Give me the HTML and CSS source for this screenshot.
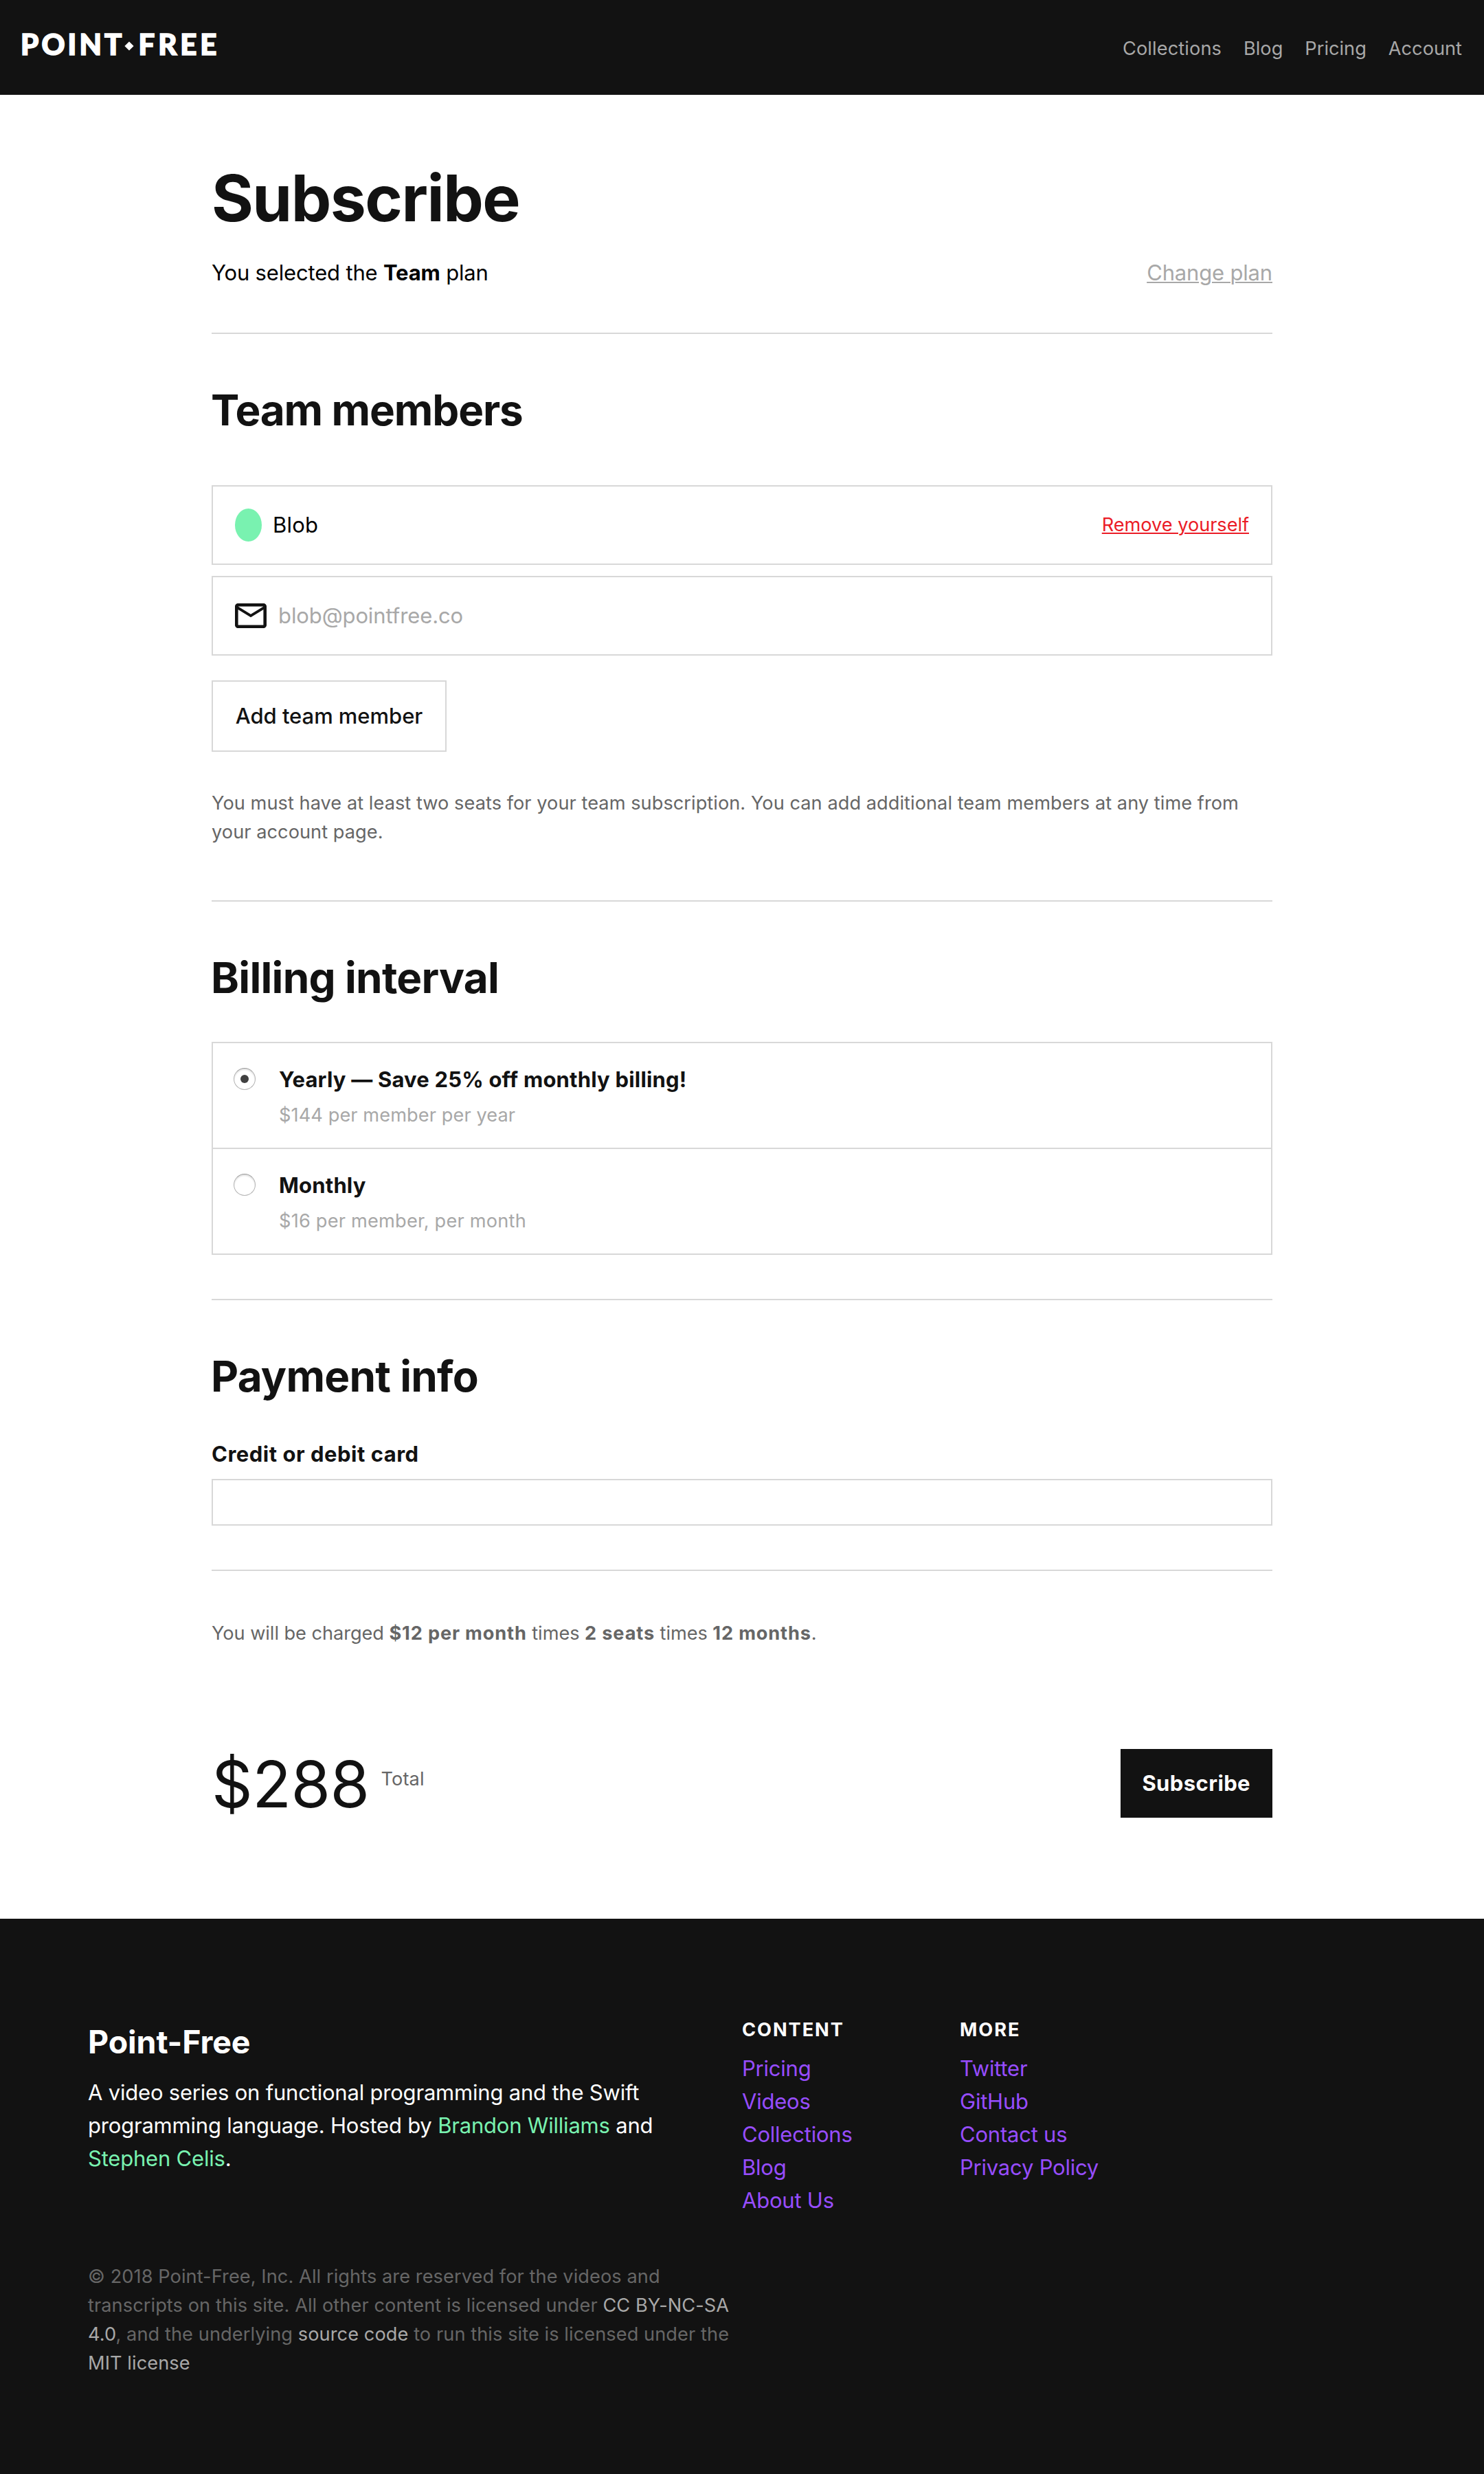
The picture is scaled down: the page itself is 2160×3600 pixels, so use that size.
FILE: index.html
```html
<!DOCTYPE html>
<html lang="en">
<head>
<meta charset="utf-8">
<title>Subscribe</title>
<link rel="stylesheet" href="styles.css">
</head>
<body>
<header class="header">
  <a class="logo"><span class="logo-point">POINT</span><svg class="logo-dot" viewBox="0 0 14 14"><path d="M7 0.4 13.6 7 7 13.6 0.4 7z" fill="#fff"/></svg><span class="logo-free">FREE</span></a>
  <nav class="nav">
    <a class="nav-wide">Collections</a><a>Blog</a><a>Pricing</a><a>Account</a>
  </nav>
</header>

<main class="main">
  <section class="section">
    <h1 class="page-title">Subscribe</h1>
    <div class="plan">
      <p>You selected the <b>Team</b> plan</p>
      <a class="change">Change plan</a>
    </div>
  </section>

  <section class="section section-team">
    <h2 class="title title-team">Team members</h2>
    <div class="member">
      <span class="avatar"></span>
      <span class="member-name">Blob</span>
      <a class="remove">Remove yourself</a>
    </div>
    <div class="member">
      <svg class="mail" viewBox="2 4 20 16" preserveAspectRatio="none"><path fill="#121212" d="M22 6c0-1.1-.9-2-2-2H4c-1.1 0-2 .9-2 2v12c0 1.1.9 2 2 2h16c1.1 0 2-.9 2-2V6zm-2 0l-8 5-8-5h16zm0 12H4V8l8 5 8-5v10z"/></svg>
      <span class="placeholder">blob@pointfree.co</span>
    </div>
    <button class="add">Add team member</button>
    <p class="note">You must have at least two seats for your team subscription. You can add additional team members at any time from your account page.</p>
  </section>

  <section class="section section-billing">
    <h2 class="title title-billing">Billing interval</h2>
    <div class="options">
      <div class="option">
        <span class="radio radio-on"></span>
        <div><div class="option-title">Yearly — Save 25% off monthly billing!</div><div class="option-price">$144 per member per year</div></div>
      </div>
      <div class="option">
        <span class="radio"></span>
        <div><div class="option-title">Monthly</div><div class="option-price option-monthly">$16 per member, per month</div></div>
      </div>
    </div>
  </section>

  <section class="section section-payment">
    <h2 class="title title-payment">Payment info</h2>
    <div class="label">Credit or debit card</div>
    <div class="card"></div>
  </section>

  <p class="charge">You will be charged <b>$12 per month</b> times <b>2 seats</b> times <b>12 months</b>.</p>
  <div class="total">
    <span class="amount">$288</span>
    <span class="total-label">Total</span>
    <button class="submit">Subscribe</button>
  </div>
</main>

<footer class="footer">
  <div class="footer-grid">
    <div class="about">
      <h4 class="footer-title">Point-Free</h4>
      <p class="about-text">A video series on functional programming and the Swift programming language. Hosted by <a>Brandon Williams</a> and <a>Stephen Celis</a>.</p>
    </div>
    <div class="links">
      <h5 class="links-title">Content</h5>
      <a>Pricing</a><a>Videos</a><a>Collections</a><a>Blog</a><a>About Us</a>
    </div>
    <div class="links">
      <h5 class="links-title">More</h5>
      <a>Twitter</a><a>GitHub</a><a>Contact us</a><a>Privacy Policy</a>
    </div>
  </div>
  <p class="legal">© 2018 Point-Free, Inc. All rights are reserved for the videos and transcripts on this site. All other content is licensed under <a>CC BY-NC-SA 4.0</a>, and the underlying <a>source code</a> to run this site is licensed under the <a>MIT license</a></p>
</footer>
</body>
</html>
```
FILE: styles.css
```css
* { box-sizing: border-box; margin: 0; padding: 0; }
body { background: #fff; color: #000; font: 400 31px/48px Inter, sans-serif; }
button { font: inherit; cursor: pointer; }
b { font-weight: 700; }

.header { display: flex; justify-content: space-between; align-items: flex-start; height: 138px; padding: 43px 32px 0; background: #121212; }
.logo { display: flex; align-items: flex-start; margin-left: -2px; color: #fff; font: 900 42px/42px Lato, sans-serif; -webkit-text-stroke: 1.6px #fff; }
.logo-point { letter-spacing: 4.1px; }
.logo-free { margin-left: 6px; letter-spacing: 4.9px; }
.logo-dot { width: 14px; height: 14px; margin-top: 17px; }
.nav { display: flex; gap: 32px; margin-top: 7px; color: #a8a8a8; font-size: 27.2px; line-height: 42px; }
.nav-wide { letter-spacing: .1px; }

.main { padding: 94px 308px 140px; }
.section { border-bottom: 2px solid #d8d8d8; padding-bottom: 64px; }
.section:first-child { padding-bottom: 63px; }
.section-team { padding: 71px 0 78px; }
.section-billing, .section-payment { padding-top: 71px; }

.page-title { color: #121212; font-size: 93px; font-weight: 700; line-height: 112px; letter-spacing: -1.54px; }
.plan { display: flex; justify-content: space-between; margin-top: 29px; letter-spacing: -.17px; }
.change { color: #a8a8a8; text-decoration: underline; text-decoration-thickness: 2px; text-underline-offset: 2px; }

.title { margin-left: -1px; color: #121212; font-size: 62px; font-weight: 700; line-height: 80px; }
.title-team { margin-bottom: 69px; letter-spacing: -1.15px; }
.title-billing { margin-bottom: 53px; letter-spacing: -.72px; }
.title-payment { margin-bottom: 49px; letter-spacing: -.75px; }

.member { display: flex; align-items: center; gap: 16px; height: 116px; padding: 0 32px; border: 2px solid #d8d8d8; }
.member + .member { gap: 17px; margin-top: 16px; }
.avatar { width: 39px; height: 48px; border-radius: 50%; background: #79f2b0; }
.member-name { letter-spacing: .2px; }
.remove { margin-left: auto; color: #eb1c26; font-size: 27.2px; letter-spacing: -.05px; text-decoration: underline; text-decoration-thickness: 2px; text-underline-offset: 2px; }
.mail { width: 46px; height: 36px; }
.placeholder { color: #a8a8a8; letter-spacing: -.1px; }
.add { display: block; width: 342px; height: 104px; margin-top: 36px; border: 2px solid #d8d8d8; background: #fff; color: #121212; font-weight: 500; letter-spacing: -.04px; }
.note { margin-top: 54px; color: #666; font-size: 27.2px; line-height: 42px; letter-spacing: .04px; }

.options { border: 2px solid #d8d8d8; }
.option { display: flex; align-items: flex-start; gap: 34px; height: 152px; padding: 29px 30px 0; }
.option + .option { height: 154px; border-top: 2px solid #d8d8d8; }
.radio { display: flex; align-items: center; justify-content: center; width: 32px; height: 32px; margin-top: 7px; border: 1px solid #b4b4b4; border-top-color: #969696; border-radius: 50%; box-shadow: inset 0 2px 2px #e2e2e2; }
.radio-on::before { content: ""; width: 12px; height: 12px; border-radius: 50%; background: #404040; }
.option-title { color: #121212; font-weight: 700; letter-spacing: .19px; }
.option-price { margin-top: 7px; color: #a8a8a8; font-size: 27.2px; line-height: 42px; letter-spacing: .08px; }
.option-monthly { letter-spacing: .2px; }

.label { color: #121212; font-weight: 700; letter-spacing: .51px; }
.card { height: 68px; margin-top: 12px; border: 2px solid #d8d8d8; }

.charge { margin-top: 70px; color: #666; font-size: 27.2px; line-height: 42px; letter-spacing: -.06px; }
.charge b { letter-spacing: .84px; }
.total { display: flex; align-items: flex-start; margin-top: 142px; }
.amount { color: #121212; font-size: 93px; line-height: 112px; letter-spacing: -.5px; }
.total-label { margin: 28px 0 0 17px; color: #666; font-size: 27.2px; line-height: 42px; letter-spacing: .12px; }
.submit { height: 100px; margin: 5px 0 0 auto; padding: 0 32px 0 31px; border: 0; background: #121212; color: #fff; font-weight: 700; letter-spacing: .4px; }

.footer { height: 808px; padding: 141px 128px 0; background: #121212; color: #fff; }
.footer-grid { display: grid; grid-template-columns: 952px 317px auto; }
.about { padding-top: 8px; }
.footer-title { font-size: 46.5px; font-weight: 700; line-height: 60px; letter-spacing: -.1px; }
.about-text { width: 850px; margin-top: 20px; letter-spacing: -.2px; }
.about-text a { color: #79f2b0; }
.links { display: flex; flex-direction: column; color: #974dff; letter-spacing: -.22px; }
.links-title { margin-bottom: 11px; color: #fff; font-size: 27.2px; line-height: 42px; letter-spacing: 1.93px; text-transform: uppercase; }
.legal { width: 944px; margin-top: 66px; color: #666; font-size: 27.2px; line-height: 42px; letter-spacing: .07px; }
.legal a { color: #a8a8a8; }
```
